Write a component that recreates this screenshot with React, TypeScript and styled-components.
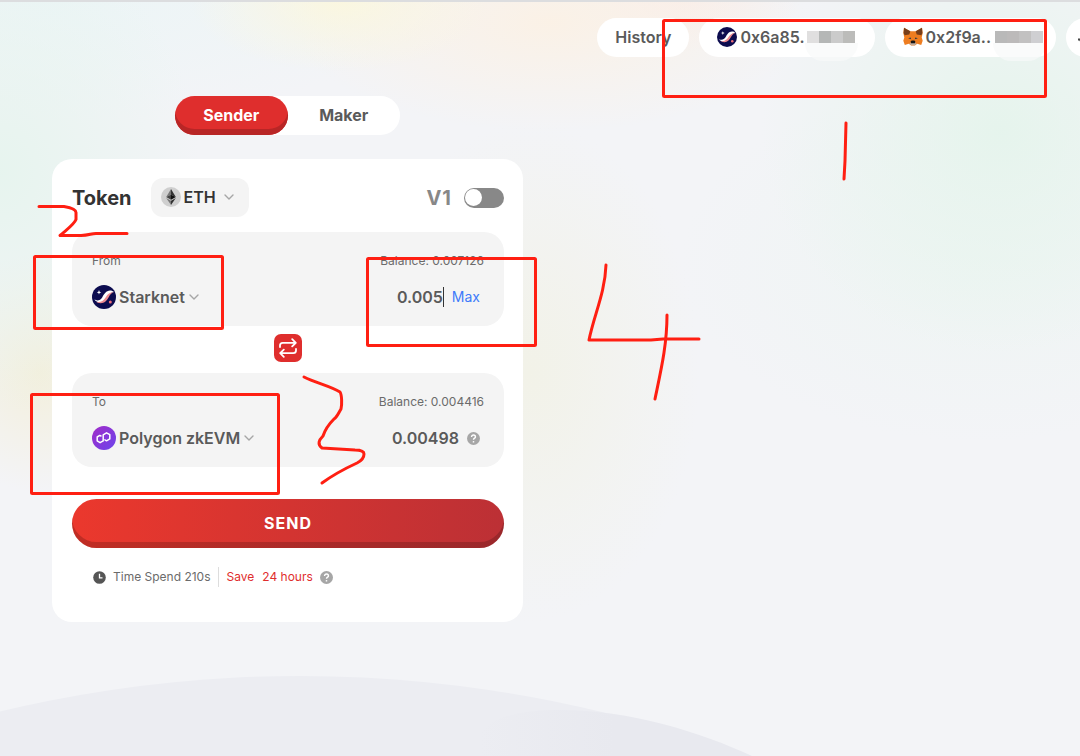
import React, { useState } from "react";
import styled, { createGlobalStyle, css } from "styled-components";

const GlobalStyle = createGlobalStyle`
  *, *::before, *::after { box-sizing: border-box; }
  html, body { margin: 0; min-height: 100%; background: #f3f4f7; }
  body, button, input { font-family: Inter, "Liberation Sans", sans-serif; }
  button, input { margin: 0; padding: 0; border: 0; background: none; color: inherit; }
  button { cursor: pointer; }
`;

const Page = styled.div`
  position: relative;
  min-height: 100vh;
  overflow: hidden;
  color: #5a5a5a;
  font-size: 16px;
  line-height: 20px;
  border-top: 2px solid #dcdddf;
  background:
    radial-gradient(ellipse 150px 70px at 340px 0px, rgba(251, 247, 222, 0.9), rgba(251, 247, 222, 0) 100%),
    radial-gradient(ellipse 260px 110px at 550px 20px, rgba(251, 241, 229, 0.95), rgba(251, 241, 229, 0) 100%),
    radial-gradient(ellipse 120px 50px at 680px 0px, rgba(251, 234, 230, 0.7), rgba(251, 234, 230, 0) 100%),
    radial-gradient(ellipse 240px 220px at 1000px 130px, rgba(229, 244, 236, 0.95), rgba(229, 244, 236, 0) 100%),
    radial-gradient(ellipse 300px 180px at 980px 260px, rgba(236, 245, 241, 0.7), rgba(236, 245, 241, 0) 100%),
    radial-gradient(ellipse 200px 240px at 0px 170px, rgba(230, 244, 238, 0.95), rgba(230, 244, 238, 0) 100%),
    radial-gradient(ellipse 110px 120px at 40px 370px, rgba(243, 239, 220, 1), rgba(243, 239, 220, 0) 100%),
    radial-gradient(ellipse 170px 250px at 530px 370px, rgba(242, 242, 232, 1), rgba(242, 242, 232, 0) 100%),
    radial-gradient(ellipse 360px 120px at 60px 0px, rgba(236, 245, 246, 1), rgba(236, 245, 246, 0) 100%),
    #f3f4f7;
`;

const Hills = styled.svg`
  position: absolute;
  left: 0;
  top: 0;
  pointer-events: none;
`;

const Header = styled.header`
  position: relative;
  display: flex;
  justify-content: flex-end;
  gap: 10px;
  padding-top: 16px;
`;

const Pill = styled.button<{ $cut?: boolean; $end?: number }>`
  display: flex;
  align-items: center;
  flex: none;
  height: 39px;
  padding: 0 ${(p) => p.$end ?? 18}px 2px 18px;
  border-radius: 20px;
  background: #fff;
  font-size: 16px;
  font-weight: 600;
  line-height: 20px;
  ${(p) =>
    p.$cut &&
    css`
      width: 80px;
      padding: 0 11px;
      margin-right: -66px;
    `}
`;

const PillIcon = styled.span`
  display: flex;
  margin-right: 3px;
`;

const Mosaic = styled.span<{ $gap: number }>`
  position: relative;
  display: flex;
  height: 12px;
  margin-left: ${(p) => p.$gap}px;

  &::after {
    content: "";
    position: absolute;
    left: -2px;
    right: -3px;
    top: 12px;
    height: 18px;
    border-radius: 0 0 24px 24px;
    background: rgba(248, 249, 249, 0.7);
  }
`;

const Block = styled.i<{ $tone: string }>`
  width: 12px;
  background: ${(p) => p.$tone};
`;

const Main = styled.main`
  position: relative;
  width: calc(100% - 104px);
  max-width: 471px;
  margin: 39px 52px 0;
  padding-bottom: 40px;
`;

const Tabs = styled.div`
  display: flex;
  width: 225px;
  height: 39px;
  margin: 0 auto;
  border-radius: 20px;
  background: #fff;
`;

const Tab = styled.button<{ $active?: boolean }>`
  flex: 1;
  padding-bottom: 2px;
  border-radius: 20px;
  font-size: 16px;
  font-weight: 700;
  line-height: 20px;
  ${(p) =>
    p.$active &&
    css`
      color: #fff;
      background: #df2e2d;
      box-shadow: inset 0 -6px 0 #b82626;
    `}
`;

const Card = styled.section`
  margin-top: 24px;
  padding: 19px 19px 35px 20px;
  border-radius: 20px;
  background: #fff;
`;

const TokenRow = styled.div`
  display: flex;
  align-items: center;
  height: 39px;
  margin-bottom: 15px;
`;

const Title = styled.h1`
  margin: 0 19px 0 0;
  color: #333;
  font-size: 20px;
  font-weight: 700;
  line-height: 24px;
`;

const TokenPicker = styled.button`
  display: flex;
  align-items: center;
  gap: 3px;
  height: 39px;
  padding: 0 14px 1px 10px;
  border-radius: 12px;
  background: #f4f4f4;
  color: #333;
  font-size: 16px;
  font-weight: 600;
  line-height: 20px;

  svg:last-child { margin-left: 4px; }
`;

const VersionLabel = styled.label`
  display: flex;
  align-items: center;
  gap: 12px;
  margin-left: auto;
  color: #888;
  font-size: 20px;
  font-weight: 700;
  line-height: 24px;
  letter-spacing: 1px;
`;

const Switch = styled.input`
  appearance: none;
  display: flex;
  width: 40px;
  height: 20px;
  padding: 1px;
  border-radius: 10px;
  background: #888;
  cursor: pointer;

  &::before {
    content: "";
    width: 17px;
    height: 17px;
    border-radius: 50%;
    background: #fff;
  }
  &:checked { justify-content: flex-end; background: #df2e2d; }
`;

const Panel = styled.div`
  display: flex;
  flex-direction: column;
  gap: 15px;
  height: 94px;
  padding: 20px;
  border-radius: 20px;
  background: #f4f4f4;
`;

const Line = styled.div`
  display: flex;
  align-items: center;
  justify-content: space-between;
`;

const Caption = styled.span`
  font-size: 12px;
  line-height: 18px;
  color: #6b6b6b;
`;

const ChainPicker = styled.button`
  display: flex;
  align-items: center;
  gap: 3px;
  height: 24px;
  font-size: 16px;
  font-weight: 600;
  line-height: 24px;
`;

const Amount = styled.div`
  display: flex;
  align-items: center;
  gap: 8px;
  padding-right: 4px;
  font-size: 16px;
  font-weight: 600;
  line-height: 24px;
`;

const AmountField = styled.span`
  display: flex;
  border-right: 1px solid #333;
`;

const AmountInput = styled.input`
  width: 100px;
  font-size: 16px;
  font-weight: 600;
  line-height: 20px;
  text-align: right;
  outline: none;
`;

const MaxButton = styled.button`
  color: #3e7bfa;
  font-size: 14px;
  line-height: 20px;
`;

const SwapButton = styled.button`
  display: flex;
  align-items: center;
  justify-content: center;
  width: 28px;
  height: 28px;
  margin: 8px auto 11px;
  border-radius: 7px;
  background: #df2e2d;
`;

const SendButton = styled.button`
  width: 100%;
  height: 49px;
  margin-top: 32px;
  padding-bottom: 2px;
  border-radius: 25px;
  background: linear-gradient(90deg, #eb382d, #bc3035);
  box-shadow: inset 0 -6px 0 rgba(0, 0, 0, 0.18);
  color: #fff;
  font-size: 16px;
  font-weight: 700;
  line-height: 20px;
  letter-spacing: 1px;
`;

const Summary = styled.div`
  display: flex;
  align-items: center;
  gap: 7px;
  height: 20px;
  margin: 19px 0 0 21px;
  font-size: 12px;
  line-height: 20px;
  color: #6b6b6b;
`;

const Saving = styled.span`
  display: flex;
  gap: 8px;
  padding-left: 8px;
  border-left: 1px solid #ddd;
  color: #df2e2d;
`;

const Markup = styled.svg`
  position: absolute;
  left: 0;
  top: -2px;
  pointer-events: none;
`;

const StarknetIcon = ({ size }: { size: number }) => (
  <svg width={size} height={size} viewBox="0 0 24 24" aria-hidden="true">
    <circle cx="12" cy="12" r="12" fill="#0c0c4f" />
    <path d="M2.400 14.600c3 1.600 6 .8 7.800-2.200C12.300 8.600 14 5.600 18 5.400c1.700 0 3 .6 4 1.500-3 .2-4.600 2-6 4.600-2 3.600-4 6-8 6-2.400 0-4.400-1.300-5.600-2.900z" fill="#fff" />
    <path d="M4 16.800c4.400 1 7.200-.8 9.600-4.400 2.200-3.300 4.200-5.200 8.400-5.300-2.600.8-3.900 2.600-5.200 5-2 3.700-4.300 6.300-8.300 6.200-1.900-.1-3.400-.6-4.500-1.500z" fill="#ec8a90" />
    <circle cx="18.300" cy="17" r="1.500" fill="#ec6d78" />
    <path d="M7 5l.6 1.700 1.700.6-1.700.6L7 9.600l-.6-1.700-1.700-.6 1.700-.6z" fill="#fff" />
  </svg>
);

const FoxIcon = () => (
  <svg width="20" height="19" viewBox="0 0 20 19" aria-hidden="true">
    <path d="M1 .8l6.300 3.400h5.400L19 .8l.7 5.300-1 4.300 1 3.300-1.500 4.200-4-1.100-2.300 1.600H8.100l-2.300-1.600-4 1.100L.3 13.700l1-3.300-1-4.300z" fill="#ee7d20" />
    <path d="M1 .8l6.300 3.400-1 3.200-4.700.8L.6 6.100zM19 .8l-6.300 3.400 1 3.200 4.700.8 1-2.100z" fill="#763e1a" />
    <path d="M5.200 11.300l2.400-.9.600 1.800zM14.800 11.300l-2.400-.9-.6 1.800z" fill="#233447" />
    <path d="M6.400 16.600l1.700-1.300h3.800l1.700 1.300-1.700 1.600H8.100z" fill="#c0ad9e" />
    <path d="M8 14.200l.6-.6h2.800l.6.600.2 2H7.800z" fill="#161616" />
  </svg>
);

const AccountIcon = () => (
  <svg width="16" height="16" viewBox="0 0 16 16" aria-hidden="true">
    <path d="M1 9.500h2l2 3.500h6l3-3.500" fill="none" stroke="#444" strokeWidth="2" />
  </svg>
);

const EthIcon = () => (
  <svg width="20" height="20" viewBox="0 0 20 20" aria-hidden="true">
    <circle cx="10" cy="10" r="10" fill="#cfcfcf" />
    <path d="M10 2L5.200 10 10 7.800z" fill="#777" />
    <path d="M10 2l4.800 8L10 7.800z" fill="#333" />
    <path d="M10 7.800L5.200 10l4.800 2.800z" fill="#444" />
    <path d="M10 7.800l4.800 2.200-4.800 2.800z" fill="#111" />
    <path d="M5.200 11l4.800 2.800V18z" fill="#777" />
    <path d="M14.800 11L10 13.800V18z" fill="#333" />
  </svg>
);

const PolygonIcon = () => (
  <svg width="24" height="24" viewBox="0 0 24 24" aria-hidden="true">
    <defs>
      <linearGradient id="polygonFill" x1="0" y1="0" x2="1" y2="1">
        <stop offset="0" stopColor="#a22bc8" />
        <stop offset="1" stopColor="#6b45ec" />
      </linearGradient>
    </defs>
    <circle cx="12" cy="12" r="12" fill="url(#polygonFill)" />
    <path
      d="M9 10l-1.200-.6-2.600 1.600v3.900l2.900 1.800 3.100-1.800V8.800l3.300-2 3.300 1.900v4.200l-3.300 1.900-1.600-.9"
      fill="none"
      stroke="#fff"
      strokeWidth="1.500"
      strokeLinejoin="round"
      strokeLinecap="round"
    />
  </svg>
);

const Chevron = () => (
  <svg width="12" height="12" viewBox="0 0 12 12" aria-hidden="true">
    <path d="M2 4l4 4 4-4" fill="none" stroke="#a6a6a6" strokeWidth="1.400" strokeLinecap="round" strokeLinejoin="round" />
  </svg>
);

const HelpIcon = () => (
  <svg width="13" height="13" viewBox="0 0 12 12" aria-hidden="true">
    <circle cx="6" cy="6" r="6" fill="#a6a6a6" />
    <path d="M4.200 4.700C4.200 3.500 5 2.800 6 2.800s1.800.7 1.800 1.700C7.800 5.700 6 5.700 6 7.200" fill="none" stroke="#fff" strokeWidth="1.300" />
    <circle cx="6" cy="9" r=".8" fill="#fff" />
  </svg>
);

const ClockIcon = () => (
  <svg width="13" height="13" viewBox="0 0 13 13" aria-hidden="true">
    <circle cx="6.500" cy="6.500" r="6.300" fill="#555" />
    <path d="M6.500 2.800v4h3" fill="none" stroke="#fff" strokeWidth="1.300" />
  </svg>
);

const SwapIcon = () => (
  <svg width="20" height="20" viewBox="0 0 20 20" aria-hidden="true">
    <g fill="none" stroke="#fff" strokeWidth="1.800" strokeLinecap="round" strokeLinejoin="round">
      <path d="M2 9V7.500C2 5.800 3 4.800 4.700 4.800H17M14.200 1.200l3.600 3.600-3.600 3.600" />
      <path d="M18 11v1.500c0 1.700-1 2.700-2.700 2.700H3M5.800 11.600l-3.600 3.600 3.600 3.600" />
    </g>
  </svg>
);

export default function App() {
  const [amount, setAmount] = useState("0.005");
  const [tab, setTab] = useState("Sender");

  return (
    <Page>
      <GlobalStyle />
      <Hills width="1080" height="754" aria-hidden="true">
        <defs>
          <linearGradient id="hill" x1="0" y1="0" x2="1" y2="0">
            <stop offset="0" stopColor="#e8e9ef" stopOpacity="0" />
            <stop offset="0.5" stopColor="#e8e9ef" />
          </linearGradient>
        </defs>
        <circle cx="300" cy="1960" r="1286" fill="#ecedf2" />
        <path d="M480 754c-10-30 20-46 80-46 70 0 140 22 192 46z" fill="url(#hill)" />
      </Hills>

      <Header>
        <Pill>History</Pill>
        <Pill $end={20}>
          <PillIcon><StarknetIcon size={20} /></PillIcon>
          0x6a85.
          <Mosaic $gap={2}>
            {["#e0dfdf", "#b5b7b6", "#cbcbcb", "#bcbcba"].map((tone) => (
              <Block key={tone} $tone={tone} />
            ))}
          </Mosaic>
        </Pill>
        <Pill $end={13}>
          <PillIcon><FoxIcon /></PillIcon>
          0x2f9a..
          <Mosaic $gap={4}>
            {["#b9b9b9", "#bcbaba", "#c2c1c1", "#cfcfd2"].map((tone) => (
              <Block key={tone} $tone={tone} />
            ))}
          </Mosaic>
        </Pill>
        <Pill $cut aria-label="Account">
          <AccountIcon />
        </Pill>
      </Header>

      <Main>
        <Tabs>
          {["Sender", "Maker"].map((name) => (
            <Tab key={name} $active={tab === name} onClick={() => setTab(name)}>
              {name}
            </Tab>
          ))}
        </Tabs>

        <Card>
          <TokenRow>
            <Title>Token</Title>
            <TokenPicker>
              <EthIcon />
              ETH
              <Chevron />
            </TokenPicker>
            <VersionLabel>
              V1
              <Switch type="checkbox" />
            </VersionLabel>
          </TokenRow>

          <Panel>
            <Line>
              <Caption>From</Caption>
              <Caption>Balance: 0.007126</Caption>
            </Line>
            <Line>
              <ChainPicker>
                <StarknetIcon size={24} />
                Starknet
                <Chevron />
              </ChainPicker>
              <Amount>
                <AmountField>
                  <AmountInput aria-label="Amount" value={amount} onChange={(e) => setAmount(e.target.value)} />
                </AmountField>
                <MaxButton>Max</MaxButton>
              </Amount>
            </Line>
          </Panel>

          <SwapButton aria-label="Swap networks">
            <SwapIcon />
          </SwapButton>

          <Panel>
            <Line>
              <Caption>To</Caption>
              <Caption>Balance: 0.004416</Caption>
            </Line>
            <Line>
              <ChainPicker>
                <PolygonIcon />
                Polygon zkEVM
                <Chevron />
              </ChainPicker>
              <Amount>
                0.00498
                <HelpIcon />
              </Amount>
            </Line>
          </Panel>

          <SendButton>SEND</SendButton>

          <Summary>
            <ClockIcon />
            <span>Time Spend 210s</span>
            <Saving>
              <span>Save</span>
              <span>24 hours</span>
            </Saving>
            <HelpIcon />
          </Summary>
        </Card>
      </Main>

      <Markup width="1080" height="756" aria-hidden="true">
        <g fill="none" stroke="#ff1f12" strokeWidth="3" strokeLinecap="round" strokeLinejoin="round">
          <rect x="663.500" y="20.500" width="382" height="76" rx="1" />
          <rect x="34.500" y="256.500" width="188" height="72" rx="1" />
          <rect x="367.500" y="258.500" width="168" height="87" rx="1" />
          <rect x="31.500" y="394.500" width="247" height="99" rx="1" />
          <path d="M846 123l-1 38-1 18" />
          <path d="M39 206.500h25c6 1 12 3 12 6v7c-2 5-8 9-16 16h21c8 0 10-2 15-2h31" />
          <path d="M304 377c12 6 26 9 36 15 2 3 2 13 1 17-3 5-4 8-7 10-7 7-9 11-11 17-4 4-6 8-1 12l33 2c4 0 9 1 9 4 0 5-3 7-7 9-13 6-24 12-35 20" />
          <path d="M606 265c-1 28-12 50-17 75h62l12-1h36M667 315c0 30-6 55-12 84" />
        </g>
      </Markup>
    </Page>
  );
}
